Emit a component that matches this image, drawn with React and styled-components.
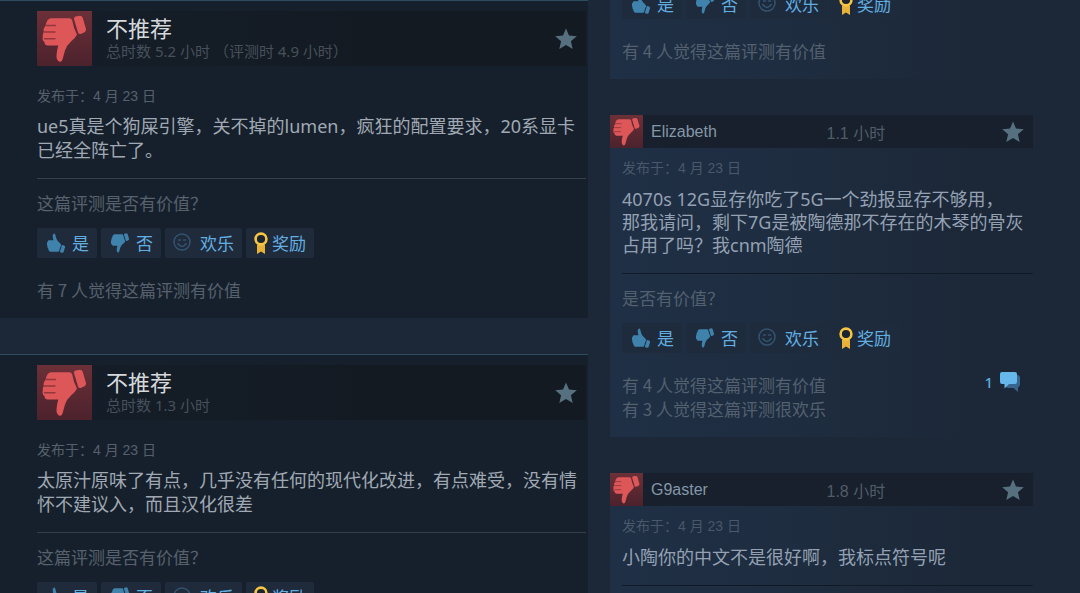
import React from "react";
import styled, { createGlobalStyle } from "styled-components";

const GlobalStyle = createGlobalStyle`
  * {
    box-sizing: border-box;
  }
  body {
    margin: 0;
    background: #1c2838;
    font-family: "Noto Sans", "Noto Sans CJK SC", sans-serif;
  }
`;

const Page = styled.main`
  display: grid;
  grid-template-columns: minmax(0, 588fr) minmax(0, 423fr);
  align-items: start;
  column-gap: 22px;
  padding-right: 47px;
  height: 100vh;
  overflow: hidden;
  background: #1c2838;
`;

const Column = styled.section`
  display: flex;
  flex-direction: column;
  gap: 36px;
  margin-top: ${(p) => (p.$scrolled ? "-24px" : "0")};
`;

const MainCard = styled.article`
  padding: 10px 2px 16px 37px;
  border-top: 1px solid #2c4d60;
  background: #16202c;
`;

const MainHeader = styled.header`
  display: flex;
  align-items: center;
  gap: 14px;
  height: 55px;
  padding-right: 9px;
  margin-bottom: 20px;
  background: linear-gradient(90deg, #151e29 0%, #131a22 60%);
`;

const HeaderText = styled.div`
  flex: 1;
`;

const Title = styled.h2`
  margin: 0 0 2px;
  font-size: 22px;
  line-height: 22px;
  font-weight: 400;
  color: #d6d9dc;
`;

const Hours = styled.p`
  margin: 0;
  font-size: 15px;
  line-height: 20px;
  color: #47505a;
`;

const SideCard = styled.article`
  padding-bottom: 16px;
  background: linear-gradient(90deg, #1f2f45 0%, #1e2d40 40%, #1c2838 85%);
`;

const SideHeader = styled.header`
  display: grid;
  grid-template-columns: 33px 1fr 1fr 22px;
  align-items: center;
  column-gap: 8px;
  height: 33px;
  padding-right: 9px;
  margin-bottom: 10px;
  font-family: "Liberation Sans", "Noto Sans CJK SC", sans-serif;
  font-size: 16px;
  color: #515c69;
  background: #17202c;
`;

const Author = styled.a`
  color: #8497a8;
  text-decoration: none;
`;

const SideBody = styled.div`
  padding-left: 12px;
`;

const Posted = styled.p`
  margin: 0 0 ${(p) => (p.$side ? "10px" : "8px")};
  font-family: "Liberation Sans", "Noto Sans CJK SC", sans-serif;
  font-size: 14px;
  line-height: 20px;
  color: ${(p) => (p.$side ? "#49586a" : "#56606c")};
`;

const Content = styled.p`
  margin: 0;
  font-size: 18px;
  line-height: ${(p) => (p.$side ? "23px" : "24px")};
  color: ${(p) => (p.$side ? "#94a1b3" : "#a0a9b3")};
  white-space: pre-line;
`;

const Divider = styled.hr`
  height: 1px;
  margin: 16px 0 12px;
  border: 0;
  background: ${(p) => (p.$side ? "#101a27" : "#33404c")};
`;

const Note = styled.p`
  margin: 0;
  font-family: "Noto Sans CJK SC", sans-serif;
  font-size: 17px;
  line-height: 24px;
  color: ${(p) => (p.$side ? "#53606f" : "#57616d")};
`;

const VoteRow = styled.div`
  display: flex;
  gap: 4px;
  width: fit-content;
  margin: 13px 0 20px;
`;

const VoteButton = styled.button`
  display: flex;
  align-items: center;
  gap: ${(p) => (p.$award ? "4px" : "7px")};
  height: 30px;
  padding: 0 8px;
  border: 0;
  border-radius: 2px;
  background: ${(p) => (p.$side ? "#1d2b3d" : "#1f2a3b")};
  color: #62aee0;
  font-family: "Noto Sans CJK SC", sans-serif;
  font-size: 17px;
  line-height: 24px;
  cursor: pointer;
`;

const Footer = styled.div`
  display: flex;
  align-items: flex-start;
  justify-content: space-between;
  padding-right: 12px;
`;

const Comments = styled.a`
  display: flex;
  align-items: center;
  gap: 6px;
  height: 18px;
  font-family: "Noto Sans", sans-serif;
  font-size: 15px;
  font-weight: 500;
  color: #5fa9d8;
  text-decoration: none;
`;

const Badge = styled.div`
  flex: none;
  width: ${(p) => p.$size}px;
  height: ${(p) => p.$size}px;
  background: linear-gradient(180deg, #6b3038 0%, #4c222c 100%);

  svg {
    display: block;
  }
`;

const HandPaths = () => (
  <>
    <path d="M14 7.2H32.5Q34.5 7.2 35.2 9.5Q36.5 17 40 23.5Q38.500 27 34 30.500Q29.500 34.500 28 39.500L25.500 48.500Q24.500 51.500 22 50.500Q19.300 49 19.500 44.500Q19.800 39 21.300 34.500H11Q7.500 34.500 7.500 31Q5 29.500 5.700 26Q5.300 23 6.800 21Q6 17.500 8.500 15Q9.500 8 14 7.200Z" />
    <path d="M38.500 5.500L43 4.800Q45 4.800 45.800 7L49 18Q49.300 20.300 47.500 21.200L43.800 23Q41.800 23.500 41 21.500L37 8Q36.800 6 38.500 5.500Z" />
  </>
);

const BigThumb = ({ size }) => (
  <Badge $size={size}>
    <svg width={size} height={size} viewBox="0 0 55 55" aria-hidden="true">
      <g fill="#dd5759">
        <HandPaths />
      </g>
      <path
        d="M9 14.500H18.500M7.500 21H18M7.500 27.800H18"
        fill="none"
        stroke="#93363d"
        strokeWidth="1.400"
        strokeLinecap="round"
      />
    </svg>
  </Badge>
);

const SmallThumb = ({ up }) => (
  <svg width="20" height="22" viewBox="1 2 48 52" aria-hidden="true">
    <g fill="#3f83ad" transform={up ? "matrix(1 0 0 -1 0 56)" : undefined}>
      <HandPaths />
    </g>
  </svg>
);

const Smiley = () => (
  <svg width="20" height="20" viewBox="0 0 20 20" aria-hidden="true">
    <g fill="none" stroke="#34536f" strokeWidth="1.500" strokeLinecap="round">
      <circle cx="9" cy="9" r="8" />
      <path d="M4.800 10.500Q9 16.500 13.200 10.500M5.500 7H7.500M10.500 7H12.500" />
    </g>
  </svg>
);

const Ribbon = () => (
  <svg width="14" height="22" viewBox="0 0 14 22" aria-hidden="true">
    <path d="M3 12.500H11V22L7 19.500L3 22Z" fill="#e8b23a" />
    <circle cx="7" cy="7" r="5.400" fill="#1b2430" stroke="#f5c543" strokeWidth="2.600" />
  </svg>
);

const Star = () => (
  <svg width="22" height="22" viewBox="0 0 22 22" aria-hidden="true">
    <path
      d="M11 .500L14 7.500L21.800 8.200L15.900 13.300L17.700 21L11 17L4.300 21L6.100 13.300L.200 8.200L8 7.500Z"
      fill="#56707f"
    />
  </svg>
);

const Bubbles = () => (
  <svg width="22" height="22" viewBox="0 0 22 22" aria-hidden="true">
    <path d="M18 4Q21 4 21 7V13Q21 16 19 16.500V21L14.500 17H9Q7 17 7 14Z" fill="#37658e" />
    <path d="M3 1H16Q18 1 18 3V10.500Q18 13 16 13H10L5.500 17.500V13H3Q1 13 1 10.500V3Q1 1 3 1Z" fill="#66b7ea" />
  </svg>
);

const Votes = ({ side }) => (
  <VoteRow>
    <VoteButton $side={side}>
      <SmallThumb up />是
    </VoteButton>
    <VoteButton $side={side}>
      <SmallThumb />否
    </VoteButton>
    <VoteButton $side={side}>
      <Smiley />
      欢乐
    </VoteButton>
    <VoteButton $side={side} $award>
      <Ribbon />
      奖励
    </VoteButton>
  </VoteRow>
);

const MainReview = ({ hours, text, count }) => (
  <MainCard>
    <MainHeader>
      <BigThumb size={55} />
      <HeaderText>
        <Title>不推荐</Title>
        <Hours>{hours}</Hours>
      </HeaderText>
      <Star />
    </MainHeader>
    <Posted>发布于：4 月 23 日</Posted>
    <Content>{text}</Content>
    <Divider />
    <Note>这篇评测是否有价值？</Note>
    <Votes />
    {count && <Note>{count}</Note>}
  </MainCard>
);

const SideFooter = ({ counts, comments }) => (
  <>
    <Votes side />
    <Footer>
      <div>
        {counts.map((line) => (
          <Note $side key={line}>
            {line}
          </Note>
        ))}
      </div>
      {comments && (
        <Comments href="#comments">
          {comments}
          <Bubbles />
        </Comments>
      )}
    </Footer>
  </>
);

const SideReview = ({ author, hours, text, counts, comments }) => (
  <SideCard>
    <SideHeader>
      <BigThumb size={33} />
      <Author href="#profile">{author}</Author>
      <span>{hours}</span>
      <Star />
    </SideHeader>
    <SideBody>
      <Posted $side>发布于：4 月 23 日</Posted>
      <Content $side>{text}</Content>
      <Divider $side />
      <Note $side>是否有价值？</Note>
      <SideFooter counts={counts} comments={comments} />
    </SideBody>
  </SideCard>
);

const App = () => {
  return (
    <>
      <GlobalStyle />
      <Page>
        <Column>
          <MainReview
            hours="总时数 5.2 小时 （评测时 4.9 小时）"
            text="ue5真是个狗屎引擎，关不掉的lumen，疯狂的配置要求，20系显卡已经全阵亡了。"
            count="有 7 人觉得这篇评测有价值"
          />
          <MainReview
            hours="总时数 1.3 小时"
            text="太原汁原味了有点，几乎没有任何的现代化改进，有点难受，没有情怀不建议入，而且汉化很差"
          />
        </Column>
        <Column $scrolled>
          <SideCard>
            <SideBody>
              <SideFooter counts={["有 4 人觉得这篇评测有价值"]} />
            </SideBody>
          </SideCard>
          <SideReview
            author="Elizabeth"
            hours="1.1 小时"
            text={
              "4070s 12G显存你吃了5G一个劲报显存不够用，\n那我请问，剩下7G是被陶德那不存在的木琴的骨灰占用了吗？我cnm陶德"
            }
            counts={["有 4 人觉得这篇评测有价值", "有 3 人觉得这篇评测很欢乐"]}
            comments="1"
          />
          <SideReview
            author="G9aster"
            hours="1.8 小时"
            text="小陶你的中文不是很好啊，我标点符号呢"
            counts={[]}
          />
        </Column>
      </Page>
    </>
  );
};

export default App;
